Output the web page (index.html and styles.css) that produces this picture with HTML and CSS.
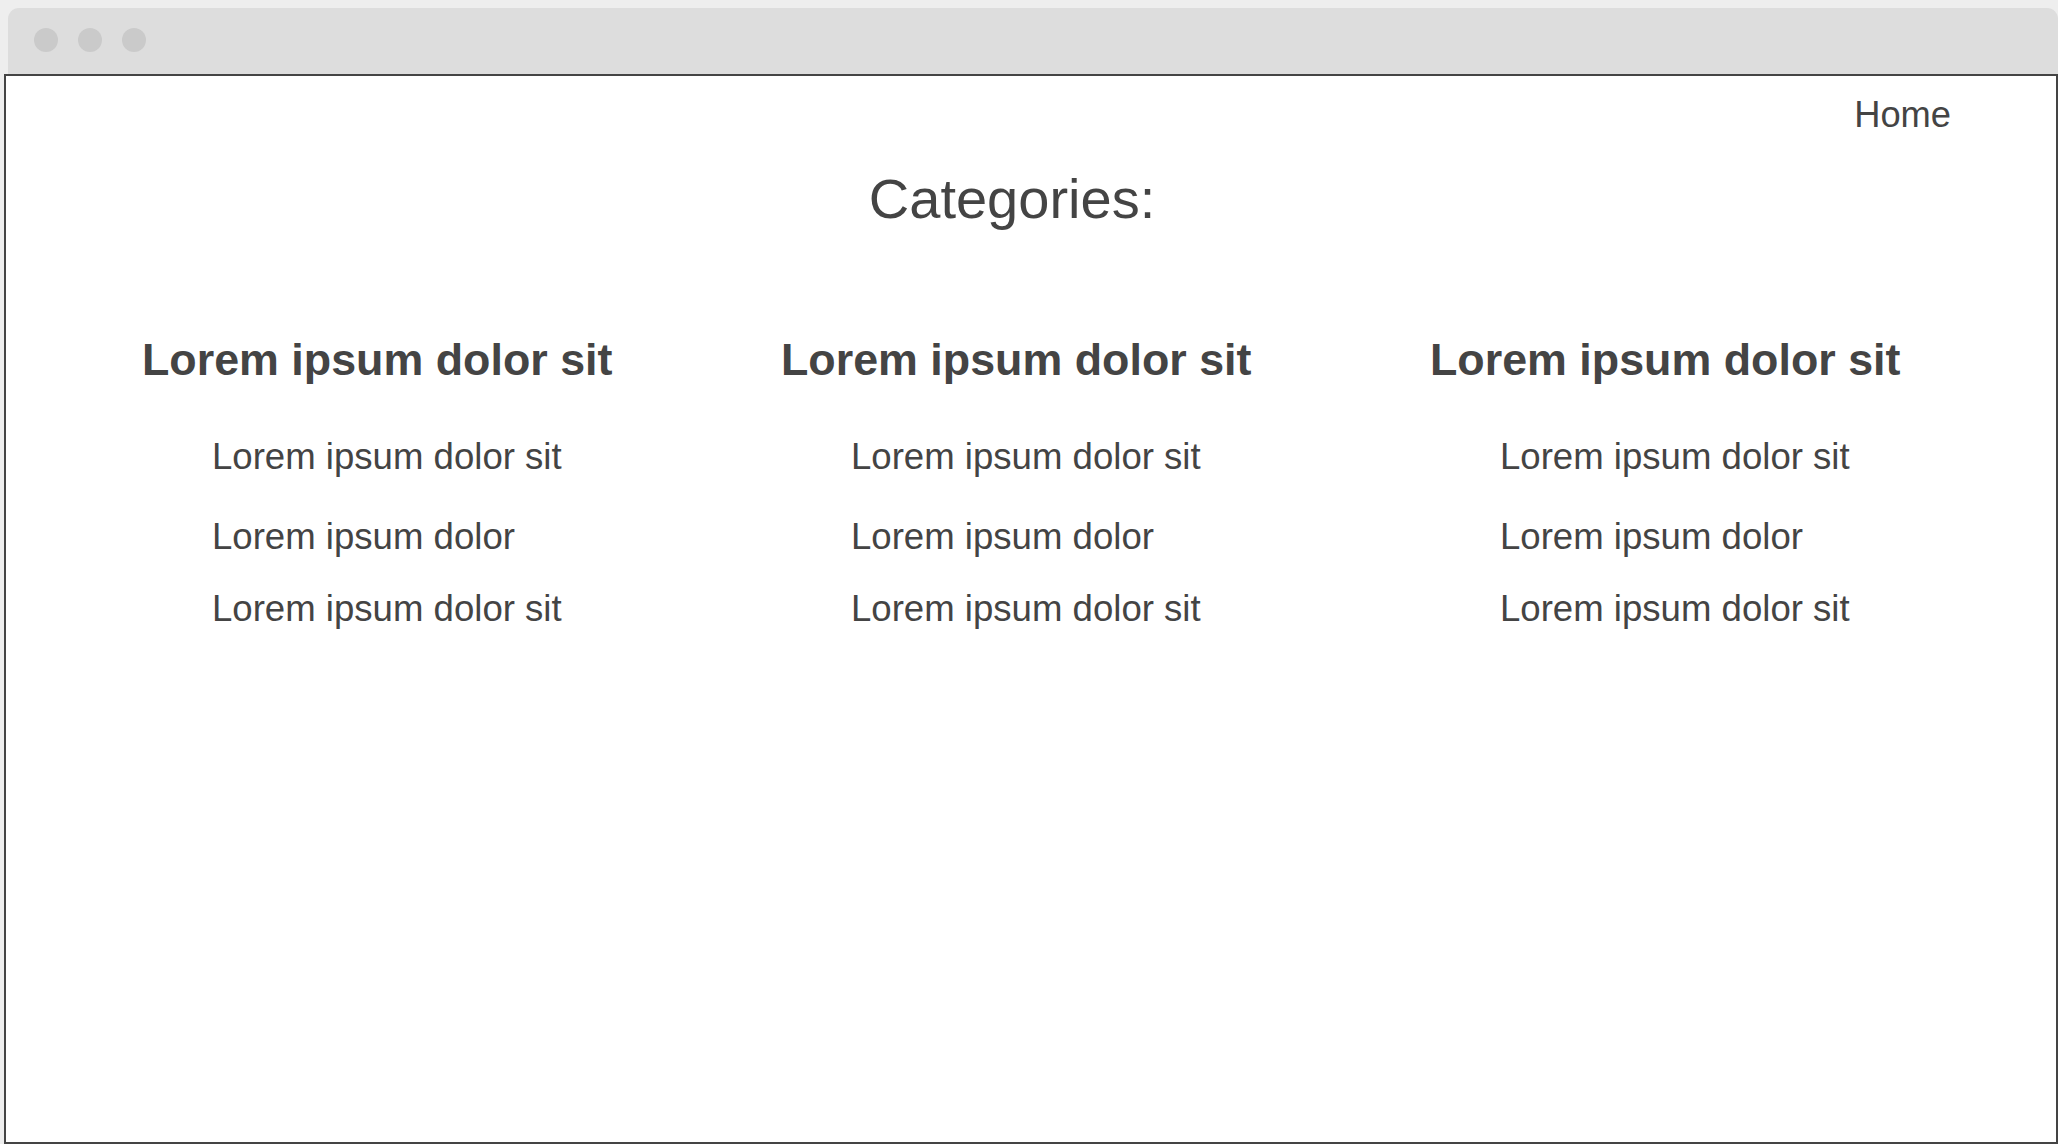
FILE: index.html
```html
<!DOCTYPE html>
<html lang="en">
<head>
<meta charset="utf-8">
<title>Categories</title>
<link rel="stylesheet" href="styles.css">
</head>
<body>
<div class="chrome">
  <span class="dot"></span>
  <span class="dot"></span>
  <span class="dot"></span>
</div>
<div class="frame">
  <nav class="nav"><a class="nav-link" href="#">Home</a></nav>
  <h1 class="title">Categories:</h1>
  <div class="columns">
    <section class="col">
      <h2 class="col-title">Lorem ipsum dolor sit</h2>
      <ul class="items">
        <li class="item item-1">Lorem ipsum dolor sit</li>
        <li class="item item-2">Lorem ipsum dolor</li>
        <li class="item item-3">Lorem ipsum dolor sit</li>
      </ul>
    </section>
    <section class="col">
      <h2 class="col-title">Lorem ipsum dolor sit</h2>
      <ul class="items">
        <li class="item item-1">Lorem ipsum dolor sit</li>
        <li class="item item-2">Lorem ipsum dolor</li>
        <li class="item item-3">Lorem ipsum dolor sit</li>
      </ul>
    </section>
    <section class="col">
      <h2 class="col-title">Lorem ipsum dolor sit</h2>
      <ul class="items">
        <li class="item item-1">Lorem ipsum dolor sit</li>
        <li class="item item-2">Lorem ipsum dolor</li>
        <li class="item item-3">Lorem ipsum dolor sit</li>
      </ul>
    </section>
  </div>
</div>
</body>
</html>
```

FILE: styles.css
```css
html, body {
  margin: 0;
  padding: 0;
}
body {
  background: #eeeeee;
  font-family: "Liberation Sans", Arial, sans-serif;
  color: #444444;
  width: 2058px;
  height: 1144px;
  overflow: hidden;
}
.chrome {
  margin: 8px 0 0 8px;
  height: 66px;
  box-sizing: border-box;
  background: #dddddd;
  border-radius: 11px 11px 0 0;
  display: flex;
  align-items: flex-start;
  gap: 20px;
  padding: 20px 0 0 26px;
}
.dot {
  width: 24px;
  height: 24px;
  border-radius: 50%;
  background: #cacaca;
}
.frame {
  margin-left: 4px;
  height: 1070px;
  box-sizing: border-box;
  border: 2px solid #444444;
  background: #ffffff;
}
.nav {
  display: flex;
  justify-content: flex-end;
  padding: 21px 105px 0 0;
}
.nav-link {
  font-size: 36.3px;
  line-height: 36px;
  color: #444444;
  text-decoration: none;
}
.title {
  margin: 38px 38px 0 0;
  text-align: center;
  font-size: 56px;
  line-height: 55px;
  font-weight: normal;
}
.columns {
  display: grid;
  grid-template-columns: 639px 649px 1fr;
  padding-left: 136px;
  margin-top: 111px;
}
.col-title {
  margin: 0;
  font-size: 44.8px;
  line-height: 44px;
  font-weight: bold;
  white-space: nowrap;
}
.items {
  list-style: none;
  margin: 0;
  padding: 0 0 0 70px;
  display: flex;
  flex-direction: column;
}
.item {
  font-size: 36.6px;
  line-height: 36px;
  white-space: nowrap;
}
.item-1 { margin-top: 58px; }
.item-2 { margin-top: 44px; }
.item-3 { margin-top: 36px; }
```
